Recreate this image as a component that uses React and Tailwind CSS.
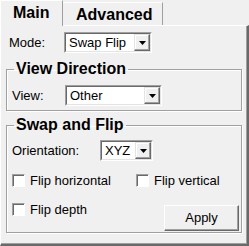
import React from "react";

function Arrow() {
  return (
    <svg width="7" height="4" viewBox="0 0 7 4" className="block">
      <path d="M0 0h7L3.5 4z" fill="#000" />
    </svg>
  );
}

function Select({ value, width, textPad = "pl-[3px]" }) {
  return (
    <div
      className={`flex h-[21px] ${width} border border-t-[#a0a0a0] border-l-[#a0a0a0] border-r-white border-b-white`}
    >
      <div className="flex flex-1 border border-t-[#696969] border-l-[#696969] border-r-[#e3e3e3] border-b-[#e3e3e3] bg-white">
        <span className={`flex-1 ${textPad} text-[13px] leading-[17px]`}>{value}</span>
        <div className="flex w-[16px] items-center justify-center border border-t-[#e3e3e3] border-l-[#e3e3e3] border-r-[#696969] border-b-[#696969] bg-[#f0f0f0] shadow-[inset_-1px_-1px_0_#a0a0a0,inset_1px_1px_0_#fff]">
          <Arrow />
        </div>
      </div>
    </div>
  );
}

function Check({ label, className = "" }) {
  return (
    <label className={`flex h-[13px] items-center ${className}`}>
      <span className="h-[13px] w-[13px] shrink-0 border border-t-[#a0a0a0] border-l-[#a0a0a0] border-r-white border-b-white bg-white shadow-[inset_1px_1px_0_#696969]" />
      <span className="ml-[5px] text-[13px] leading-[13px]">{label}</span>
    </label>
  );
}

function Group({ title, className = "", children }) {
  return (
    <fieldset
      className={`w-[236px] border border-[#a0a0a0] pl-[5px] pr-[2px] shadow-[inset_1px_1px_0_#fff,1px_1px_0_#fff] ${className}`}
    >
      <legend className="ml-[2px] px-[2px] text-[16px] font-bold leading-[18px]">{title}</legend>
      {children}
    </fieldset>
  );
}

export default function App() {
  return (
    <div className="h-[246px] w-[249px] bg-[#f0f0f0] font-['Liberation_Sans',Arial,sans-serif] text-black">
      <div className="flex h-[25px] items-start">
        <div className="relative z-10 h-[26px] w-[63px] border-l border-t border-r border-l-white border-t-white border-r-[#a0a0a0] bg-[#f0f0f0] pl-[12px] pt-[3px] text-[16px] font-bold leading-[18px]">
          Main
        </div>
        <div className="mt-[2px] h-[23px] w-[100px] border-t border-r border-t-white border-r-[#a0a0a0] pl-[13px] pt-[3px] text-[16px] font-bold leading-[18px]">
          Advanced
        </div>
      </div>
      <div className="h-[221px] border-l border-t border-l-white border-t-white border-r-2 border-b-2 border-r-[#696969] border-b-[#696969] shadow-[inset_-1px_-1px_0_#a0a0a0]">
        <div className="mt-[6px] flex items-center pl-[8px]">
          <span className="w-[55px] text-[13px]">Mode:</span>
          <Select value="Swap Flip" width="w-[88px]" />
        </div>

        <Group title="View Direction" className="ml-[5px] mt-[7px] pb-[4px] pt-[7px]">
          <div className="flex items-center">
            <span className="w-[53px] text-[13px]">View:</span>
            <Select value="Other" width="w-[97px]" />
          </div>
        </Group>

        <Group title="Swap and Flip" className="ml-[5px] mt-[5px] pb-[1px] pt-[6px]">
          <div className="flex items-center">
            <span className="w-[88px] text-[13px]">Orientation:</span>
            <Select value="XYZ" width="w-[53px]" />
          </div>
          <div className="mt-[13px] flex">
            <Check label="Flip horizontal" className="w-[124px]" />
            <Check label="Flip vertical" />
          </div>
          <div className="mt-[16px] flex items-start justify-between">
            <Check label="Flip depth" />
            <button className="mt-[2px] h-[26px] w-[75px] border border-t-white border-l-white border-r-[#696969] border-b-[#696969] bg-[#f0f0f0] text-[13px] shadow-[inset_-1px_-1px_0_#a0a0a0]">
              Apply
            </button>
          </div>
        </Group>
      </div>
    </div>
  );
}
